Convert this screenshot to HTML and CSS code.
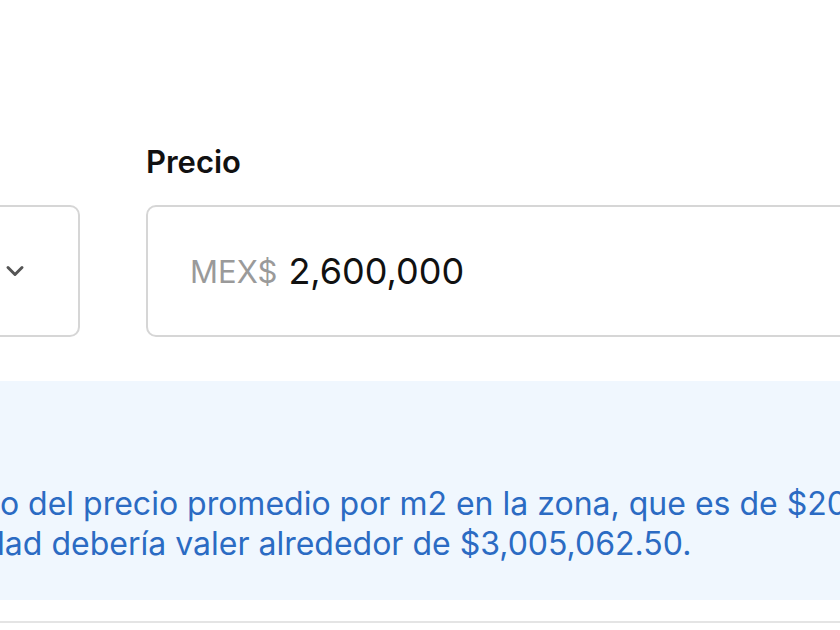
FILE: index.html
```html
<!DOCTYPE html>
<html>
<head>
	<meta charset="UTF-8">
	<title>Precio de la propiedad</title>
	<link rel="stylesheet" href="styles.css">
</head>
<body>
<div class="page">

	<div class="form-row">
		<div class="field field-unit">
			<label class="field-label">Superficie</label>
			<div class="select-box">
				<span class="select-value">m2</span>
				<svg class="chevron" width="20" height="12" viewBox="0 0 20 12">
					<path d="M3 2.5 L10 9.5 L17 2.5" fill="none" stroke="#555555" stroke-width="3" stroke-linecap="round" stroke-linejoin="round"/>
				</svg>
			</div>
		</div>

		<div class="field field-price">
			<label class="field-label" for="ID_Precio">Precio</label>
			<div class="input-box">
				<span class="currency">MEX$</span>
				<input id="ID_Precio" class="input-value" type="text" value="2,600,000">
			</div>
		</div>
	</div>

	<div class="info-box">
		<p class="info-text">
			<span class="line line-a">Este es un estimado con base en el cálculo del precio promedio por m2 en la zona, que es de $20,033.75 por m2.</span>
			<span class="line line-b">Con esas medidas, tu propiedad debería valer alrededor de $3,005,062.50.</span>
		</p>
	</div>

	<div class="divider"></div>
</div>
</body>
</html>
```

FILE: styles.css
```css
html, body {
	margin: 0;
	padding: 0;
	background: #FFFFFF;
	overflow: hidden;
}

body {
	font-family: Inter, "Noto Sans", sans-serif;
	color: #111111;
}

.page {
	width: 1800px;
	margin-left: -560px;
	padding-top: 144px;
}

.form-row {
	display: flex;
	column-gap: 66px;
}

.field {
	display: flex;
	flex-direction: column;
}

.field-unit {
	width: 640px;
}

.field-price {
	flex: 1;
}

.field-label {
	font-size: 31px;
	line-height: 36px;
	font-weight: 600;
	margin-bottom: 25px;
}

.field-unit .field-label {
	visibility: hidden;
}

.select-box, .input-box {
	box-sizing: border-box;
	height: 132px;
	border: 2px solid #D6D6D6;
	border-radius: 10px;
	display: flex;
	align-items: center;
}

.select-box {
	justify-content: space-between;
	padding: 0 53px 0 40px;
}

.select-value {
	font-size: 34px;
	color: #222222;
}

.chevron {
	display: block;
}

.input-box {
	padding-left: 42px;
}

.currency {
	font-size: 31px;
	color: #9A9A9A;
	margin-right: 11px;
}

.input-value {
	border: none;
	outline: none;
	background: transparent;
	padding: 0;
	font-family: Inter, "Noto Sans", sans-serif;
	font-size: 36px;
	color: #111111;
	flex: 1;
}

.info-box {
	margin-top: 44px;
	background: #F0F7FE;
	padding: 103px 32px 36px 32px;
}

.info-text {
	margin: 0;
	font-size: 32px;
	line-height: 40px;
	color: #2B6BC3;
	white-space: nowrap;
}

.line {
	display: block;
}

.line-a {
	text-indent: -104px;
}

.line-b {
	text-indent: 82px;
}

.divider {
	margin-top: 21px;
	height: 2px;
	background: #E4E4E4;
}
```
